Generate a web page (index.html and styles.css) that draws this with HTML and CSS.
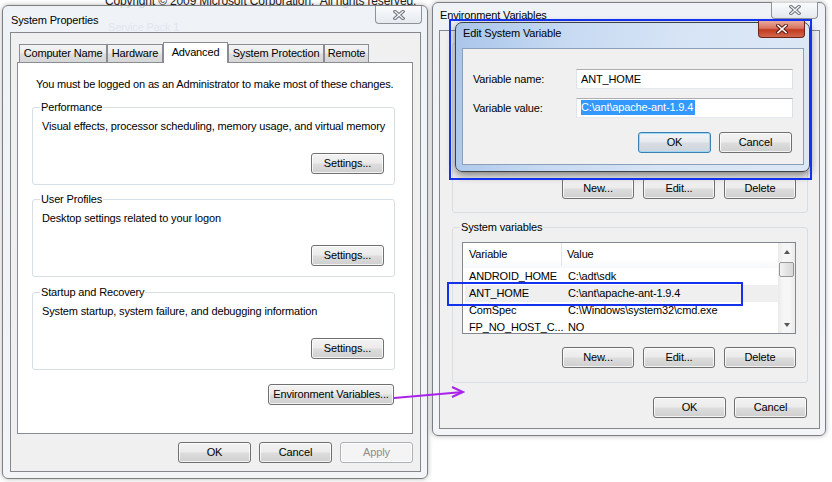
FILE: index.html
```html
<!DOCTYPE html>
<html lang="en">
<head>
  <meta charset="UTF-8" />
  <title>System Properties - Environment Variables</title>
  <link rel="stylesheet" href="styles.css">
</head>
<body>
  <div class="desk-copy">Copyright © 2009 Microsoft Corporation.&nbsp; All rights reserved.</div>
  <div class="desk-sp">Service Pack 1</div>

  <!-- System Properties -->
  <div class="win sysprop">
    <div class="titlebar">
      <span class="title">System Properties</span>
      <span class="close">
        <svg width="12" height="10" viewBox="0 0 12 10"><path d="M2 1.5 L10 8.5 M10 1.5 L2 8.5" stroke="#6f747c" stroke-width="3.4" stroke-linecap="square"/><path d="M2 1.5 L10 8.5 M10 1.5 L2 8.5" stroke="#f4f5f7" stroke-width="1.3" stroke-linecap="square"/></svg>
      </span>
    </div>
    <div class="client">
      <div class="tabs">
        <div class="tab tab-cn">Computer Name</div>
        <div class="tab tab-hw">Hardware</div>
        <div class="tab tab-adv active">Advanced</div>
        <div class="tab tab-sp">System Protection</div>
        <div class="tab tab-rm">Remote</div>
      </div>
      <div class="tabpanel">
        <p class="note">You must be logged on as an Administrator to make most of these changes.</p>

        <div class="group">
          <div class="group-title">Performance</div>
          <p class="group-text">Visual effects, processor scheduling, memory usage, and virtual memory</p>
          <div class="group-actions"><button class="btn">Settings...</button></div>
        </div>

        <div class="group">
          <div class="group-title">User Profiles</div>
          <p class="group-text">Desktop settings related to your logon</p>
          <div class="group-actions"><button class="btn">Settings...</button></div>
        </div>

        <div class="group group-startup">
          <div class="group-title">Startup and Recovery</div>
          <p class="group-text">System startup, system failure, and debugging information</p>
          <div class="group-actions"><button class="btn">Settings...</button></div>
        </div>

        <div class="panel-actions"><button class="btn btn-env">Environment Variables...</button></div>
      </div>
      <div class="dialog-actions">
        <button class="btn">OK</button>
        <button class="btn">Cancel</button>
        <button class="btn" disabled>Apply</button>
      </div>
    </div>
  </div>

  <!-- Environment Variables -->
  <div class="win envvars">
    <div class="titlebar">
      <span class="title">Environment Variables</span>
      <span class="close">
        <svg width="12" height="10" viewBox="0 0 12 10"><path d="M2 1.5 L10 8.5 M10 1.5 L2 8.5" stroke="#6f747c" stroke-width="3.4" stroke-linecap="square"/><path d="M2 1.5 L10 8.5 M10 1.5 L2 8.5" stroke="#f4f5f7" stroke-width="1.3" stroke-linecap="square"/></svg>
      </span>
    </div>
    <div class="client">
      <!-- user variables: hidden under the edit dialog -->
      <div class="group env-group user-group">
        <div class="group-title">&nbsp;</div>
        <div class="listbox"></div>
        <div class="group-buttons">
          <button class="btn btn-sm">New...</button>
          <button class="btn btn-sm">Edit...</button>
          <button class="btn btn-sm">Delete</button>
        </div>
      </div>

      <div class="group env-group sys-group">
        <div class="group-title">System variables</div>
        <div class="listbox">
          <div class="list-body">
            <div class="list-head"><span class="col-var">Variable</span><span class="col-val">Value</span></div>
            <div class="row"><span class="col-var">ANDROID_HOME</span><span class="col-val">C:\adt\sdk</span></div>
            <div class="row selected"><span class="col-var">ANT_HOME</span><span class="col-val">C:\ant\apache-ant-1.9.4</span></div>
            <div class="row"><span class="col-var">ComSpec</span><span class="col-val">C:\Windows\system32\cmd.exe</span></div>
            <div class="row"><span class="col-var">FP_NO_HOST_C...</span><span class="col-val">NO</span></div>
          </div>
          <div class="scrollbar">
            <span class="sb-btn"><i class="arrow-up"></i></span>
            <span class="sb-thumb"></span>
            <span class="sb-track"></span>
            <span class="sb-btn"><i class="arrow-down"></i></span>
          </div>
        </div>
        <div class="group-buttons">
          <button class="btn btn-sm">New...</button>
          <button class="btn btn-sm">Edit...</button>
          <button class="btn btn-sm">Delete</button>
        </div>
      </div>

      <div class="dialog-actions env-actions">
        <button class="btn">OK</button>
        <button class="btn">Cancel</button>
      </div>
    </div>
  </div>

  <!-- Edit System Variable -->
  <div class="win editvar">
    <div class="titlebar">
      <span class="title">Edit System Variable</span>
      <span class="close close-red">
        <svg width="12" height="10" viewBox="0 0 12 10"><path d="M2 1.5 L10 8.5 M10 1.5 L2 8.5" stroke="#5a1a10" stroke-width="3.6" stroke-linecap="square"/><path d="M2 1.5 L10 8.5 M10 1.5 L2 8.5" stroke="#ffffff" stroke-width="1.6" stroke-linecap="square"/></svg>
      </span>
    </div>
    <div class="client">
      <div class="form-row">
        <label class="form-label">Variable name:</label>
        <div class="field">ANT_HOME</div>
      </div>
      <div class="form-row">
        <label class="form-label">Variable value:</label>
        <div class="field"><span class="sel">C:\ant\apache-ant-1.9.4</span></div>
      </div>
      <div class="dialog-actions edit-actions">
        <button class="btn btn-default">OK</button>
        <button class="btn">Cancel</button>
      </div>
    </div>
  </div>

  <!-- annotations -->
  <div class="mark mark-dialog"></div>
  <div class="mark mark-row"></div>
  <svg class="pointer" width="80" height="26" viewBox="0 0 80 26">
    <path d="M4 18 L73 12" stroke="#ab22ec" stroke-width="2" fill="none"/>
    <path d="M62 7 L73 12 L62 17" stroke="#ab22ec" stroke-width="2" fill="none"/>
  </svg>
</body>
</html>
```

FILE: styles.css
```css
* {
  margin: 0;
  padding: 0;
  box-sizing: border-box;
}

body {
  width: 832px;
  height: 482px;
  position: relative;
  overflow: hidden;
  background: #fff;
  font: 11px/15px "Liberation Sans", Arial, sans-serif;
  letter-spacing: -0.15px;
  color: #000;
}

button {
  font: inherit;
  letter-spacing: inherit;
  color: inherit;
}

/* things on the desktop behind the windows */
.desk-copy {
  position: absolute;
  top: -6px;
  left: 105px;
  font-size: 12px;
  line-height: 14px;
  color: #222;
}

.desk-sp {
  position: absolute;
  top: 20px;
  left: 108px;
  color: #8fa3c2;
}

/* window frames */
.win {
  position: absolute;
  display: flex;
  flex-direction: column;
  border: 1px solid #7d7f83;
  border-radius: 6px;
  background: linear-gradient(180deg, rgba(236, 240, 245, 0.86), rgba(242, 244, 247, 0.94));
  box-shadow: 0 0 5px rgba(0, 0, 0, 0.3);
}

.titlebar {
  display: flex;
  align-items: flex-start;
  flex-shrink: 0;
}

.close {
  margin-left: auto;
  width: 47px;
  height: 18px;
  display: flex;
  align-items: center;
  justify-content: center;
  border: 1px solid #8f9297;
  border-top: none;
  border-radius: 0 0 4px 4px;
  background: linear-gradient(180deg, rgba(255, 255, 255, 0.7), rgba(226, 231, 237, 0.7));
}

.close-red {
  height: 17px;
  border: 1px solid #6e2318;
  border-top: none;
  background: linear-gradient(180deg, #e9a99a 0%, #d8745f 45%, #c2391f 55%, #d2664c 100%);
}

.client {
  flex: 1;
  background: #f0f0f0;
  border: 1px solid #85878b;
}

/* System Properties */
.sysprop {
  left: 2px;
  top: 5px;
  width: 426px;
  height: 474px;
  padding: 0 6px 6px 7px;
}

.sysprop .titlebar {
  height: 26px;
}

.sysprop .title {
  margin: 7px 0 0 1px;
}

.sysprop .close {
  margin-right: -1px;
}

.sysprop .client {
  padding: 9px 7px 0 6px;
}

.tabs {
  display: flex;
  align-items: flex-end;
  height: 20px;
  margin-left: 2px;
  position: relative;
  z-index: 1;
}

.tab {
  height: 18px;
  line-height: 17px;
  text-align: center;
  border: 1px solid #898c95;
  border-bottom: none;
  background: linear-gradient(180deg, #f4f4f4 0%, #ebebeb 48%, #dedede 52%, #d6d6d6 100%);
}

.tab.active {
  height: 21px;
  margin-bottom: -1px;
  line-height: 18px;
  background: #fff;
}

.tab-cn { width: 88px; }
.tab-hw { width: 56px; }
.tab-adv { width: 65px; }
.tab-sp { width: 96px; }
.tab-rm { width: 45px; }

.tabpanel {
  width: 396px;
  height: 372px;
  border: 1px solid #898c95;
  background: #fff;
  padding: 14px 17px 0 14px;
}

.note {
  padding-left: 4px;
}

.group {
  border: 1px solid #d5dfe5;
  border-radius: 3px;
  margin-top: 14px;
}

.tabpanel .note + .group,
.tabpanel .group-startup {
  margin-top: 15px;
}

.group-title {
  display: table;
  margin: -8px 0 0 7px;
  padding: 0 1px;
  background: #fff;
}

.group-text {
  margin: 4px 0 0 9px;
}

.group-actions {
  display: flex;
  justify-content: flex-end;
  margin-top: 19px;
  padding: 0 10px 10px 0;
}

.panel-actions {
  display: flex;
  justify-content: flex-end;
  margin-top: 14px;
  padding-right: 1px;
}

.dialog-actions {
  display: flex;
  justify-content: flex-end;
  gap: 8px;
  margin-top: 8px;
}

/* buttons */
.btn {
  width: 73px;
  height: 21px;
  border: 1px solid #707070;
  border-radius: 3px;
  background: linear-gradient(180deg, #f3f3f3 0%, #ebebeb 48%, #dddddd 52%, #cfcfcf 100%);
  box-shadow: inset 0 0 0 1px rgba(255, 255, 255, 0.75);
  cursor: default;
}

.btn-sm {
  width: 72px;
}

.btn-env {
  width: 126px;
}

.btn:disabled {
  border-color: #adb2b5;
  background: #f4f4f4;
  color: #8d8d8d;
}

.btn-default {
  border-color: #3c7fb1;
  background: linear-gradient(180deg, #f2f5f8 0%, #e6eaee 48%, #d8dde3 52%, #cdd4dc 100%);
  box-shadow: inset 0 0 0 1px #9ed7f6;
}

/* Environment Variables */
.envvars {
  left: 432px;
  top: 2px;
  width: 394px;
  height: 434px;
  padding: 0 5px 6px 6px;
}

.envvars .titlebar {
  height: 27px;
}

.envvars .title {
  margin: 5px 0 0 1px;
}

.envvars .close {
  height: 17px;
  margin-top: -1px;
  margin-right: 2px;
}

.envvars .client {
  padding: 12px 11px 0 12px;
}

.env-group {
  margin-top: 0;
  padding: 0 11px 13px 9px;
}

.env-group .group-title {
  margin-left: -2px;
  background: #f0f0f0;
}

.sys-group {
  margin-top: 14px;
  padding-bottom: 14px;
}

.listbox {
  display: flex;
  margin-top: 7px;
  border: 1px solid #828790;
  background: #fff;
  overflow: hidden;
}

.user-group .listbox {
  height: 107px;
}

.sys-group .listbox {
  height: 92px;
}

.list-body {
  flex: 1;
  overflow: hidden;
}

.list-head {
  display: flex;
  height: 23px;
  line-height: 22px;
  padding-bottom: 2px;
  box-sizing: content-box;
  background: linear-gradient(180deg, #fff 0%, #fff 60%, #f7f8f9 100%);
}

.list-head .col-var {
  width: 99px;
  padding-left: 6px;
  border-right: 1px solid #e3e5e8;
}

.list-head .col-val {
  padding-left: 5px;
}

.row {
  display: flex;
  height: 17px;
  line-height: 17px;
  margin-left: 2px;
  white-space: nowrap;
}

.row .col-var {
  width: 97px;
  padding-left: 4px;
}

.row .col-val {
  padding-left: 6px;
}

.row.selected {
  background: #efefef;
}

.group-buttons {
  display: flex;
  justify-content: flex-end;
  gap: 9px;
  margin-top: 13px;
}

.scrollbar {
  width: 17px;
  display: flex;
  flex-direction: column;
  background: linear-gradient(90deg, #eaeaea 0%, #f6f6f6 30%, #f6f6f6 70%, #eaeaea 100%);
}

.sb-btn {
  height: 17px;
  display: flex;
  align-items: center;
  justify-content: center;
}

.sb-thumb {
  height: 15px;
  margin: 2px 1px 0;
  border: 1px solid #979797;
  border-radius: 2px;
  background: linear-gradient(90deg, #f3f3f3, #e3e3e3 50%, #d8d8d8);
}

.sb-track {
  flex: 1;
}

.arrow-up,
.arrow-down {
  width: 0;
  height: 0;
  border-left: 3.5px solid transparent;
  border-right: 3.5px solid transparent;
}

.arrow-up {
  border-bottom: 4px solid #555;
}

.arrow-down {
  border-top: 4px solid #555;
}

.env-actions {
  margin-top: 14px;
  padding-right: 1px;
}

/* Edit System Variable */
.editvar {
  left: 455px;
  top: 22px;
  width: 355px;
  height: 150px;
  padding: 0 5px 6px 6px;
  border-color: #3f4246;
  border-radius: 7px;
  background: linear-gradient(100deg, #a9c5ea 0%, #c7daf2 30%, #d6e4f5 60%, #dde8f5 100%);
  box-shadow: 0 3px 9px rgba(0, 0, 0, 0.5);
  z-index: 5;
}

.editvar .titlebar {
  height: 25px;
}

.editvar .title {
  margin: 3px 0 0 1px;
}

.editvar .close {
  margin-top: -2px;
  margin-right: -1px;
}

.editvar .client {
  border-color: #8c9fb8;
  padding: 20px 10px 0 10px;
}

.form-row {
  display: flex;
  align-items: center;
}

.form-row + .form-row {
  margin-top: 9px;
}

.form-label {
  flex: 1;
}

.field {
  width: 217px;
  height: 20px;
  line-height: 18px;
  padding-left: 4px;
  border: 1px solid;
  border-color: #abadb3 #dbdfe6 #e3e9ef #e2e3ea;
  background: #fff;
  white-space: nowrap;
}

.sel {
  display: inline-block;
  vertical-align: top;
  margin-top: 1px;
  line-height: 15px;
  padding-right: 2px;
  background: #3399ff;
  color: #fff;
}

.edit-actions {
  margin-top: 14px;
  padding-right: 1px;
}

/* annotations drawn over the screenshot */
.mark {
  position: absolute;
  border: 2px solid #1432ee;
  z-index: 10;
}

.mark-dialog {
  left: 449px;
  top: 19px;
  width: 363px;
  height: 161px;
}

.mark-row {
  left: 447px;
  top: 282px;
  width: 296px;
  height: 24px;
}

.pointer {
  position: absolute;
  left: 390px;
  top: 380px;
  z-index: 10;
}
```
